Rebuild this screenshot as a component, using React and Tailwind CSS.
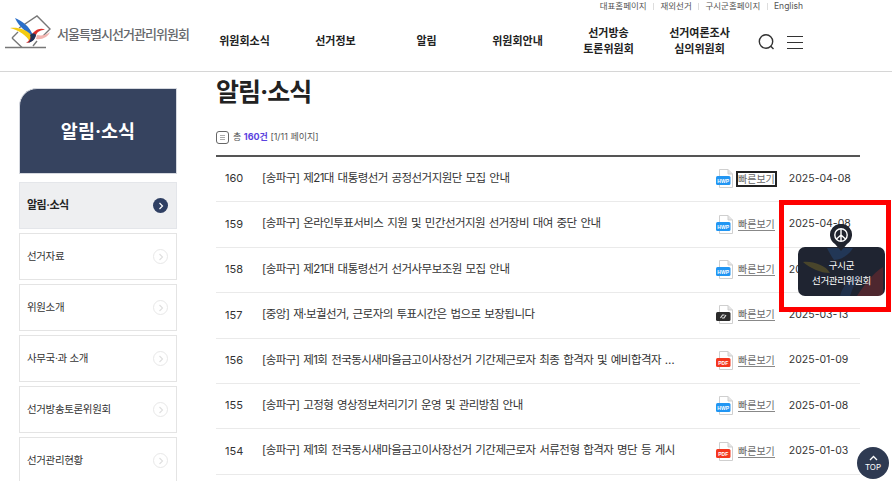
import React from 'react';

const font = { fontFamily: 'Inter, "Noto Sans CJK KR", "Noto Sans", sans-serif' };

const NAV = [
  ['위원회소식'],
  ['선거정보'],
  ['알림'],
  ['위원회안내'],
  ['선거방송', '토론위원회'],
  ['선거여론조사', '심의위원회'],
];

const SIDE = ['선거자료', '위원소개', '사무국·과 소개', '선거방송토론위원회', '선거관리현황'];

const ROWS = [
  { no: 160, title: '[송파구] 제21대 대통령선거 공정선거지원단 모집 안내', type: 'hwp', date: '2025-04-08', focus: true },
  { no: 159, title: '[송파구] 온라인투표서비스 지원 및 민간선거지원 선거장비 대여 중단 안내', type: 'hwp', date: '2025-04-08' },
  { no: 158, title: '[송파구] 제21대 대통령선거 선거사무보조원 모집 안내', type: 'hwp', date: '2025-04-08' },
  { no: 157, title: '[중앙] 재·보궐선거, 근로자의 투표시간은 법으로 보장됩니다', type: 'link', date: '2025-03-13' },
  { no: 156, title: '[송파구] 제1회 전국동시새마을금고이사장선거 기간제근로자 최종 합격자 및 예비합격자 …', type: 'pdf', date: '2025-01-09' },
  { no: 155, title: '[송파구] 고정형 영상정보처리기기 운영 및 관리방침 안내', type: 'hwp', date: '2025-01-08' },
  { no: 154, title: '[송파구] 제1회 전국동시새마을금고이사장선거 기간제근로자 서류전형 합격자 명단 등 게시', type: 'pdf', date: '2025-01-03' },
];

const Logo = () => (
  <svg width="46" height="34" viewBox="0 0 46 34" className="shrink-0">
    <path d="M14 13 L32 1 L45 14 L38 21 M7 23 L17 32.5 M7 23 L13 17 M32 26 L28 31" fill="none" stroke="#777" strokeWidth="1.4" />
    <path d="M0 32.5 H41" stroke="#777" strokeWidth="1.3" />
    <path d="M10 3 C17 6 25 11 28 21 C22 18 14 12 10 3Z" fill="#2a6fc9" />
    <path d="M5 13 C12 12 22 14 27 21 C27 24 26 26 25 27 C22 21 14 15 5 13Z" fill="#f4cb12" />
    <path d="M26 21 C29 15 36 12 40 15 C35 15 32 17 31 20 C30 24 26 28 21 28 C24 26 25 24 26 21Z" fill="#dc2f2b" />
    <path d="M25 20 C27 18 30 18 31 20 C30 25 27 27 23 28 C26 25 26 23 25 20Z" fill="#1f3257" />
    <path d="M32 20 C37 21 41 20 45 17 C43 22 37 25 31 24Z" fill="#f2b4b0" />
  </svg>
);

const FileIcon = ({ type }) => {
  const color = type === 'hwp' ? '#2196f3' : type === 'pdf' ? '#f4361e' : '#2b2b2b';
  const label = type === 'hwp' ? 'HWP' : type === 'pdf' ? 'PDF' : '';
  return (
    <svg width="17" height="19" viewBox="0 0 17 19" className="shrink-0">
      <path d="M3.5 .5 H12 L16.5 5 V18.5 H3.5Z" fill="#fff" stroke="#cfcfcf" />
      <path d="M12 .5 V5 H16.5" fill="#e4e4e4" stroke="#cfcfcf" />
      <rect x="0" y="7" width="14.5" height="9" rx="1.5" fill={color} />
      {label ? (
        <text x="7.2" y="13.5" textAnchor="middle" fontSize="5" fontWeight="700" fill="#fff" fontFamily="Liberation Sans">{label}</text>
      ) : (
        <path d="M4.5 13 L6.5 10 H8.5 M10 10 L8 13 H6" fill="none" stroke="#ddd" strokeWidth="1.2" />
      )}
    </svg>
  );
};

const Chevron = ({ active }) => (
  <span className={`flex h-[15px] w-[15px] items-center justify-center rounded-full ${active ? 'bg-[#2f3f63]' : 'border border-[#e8e8e8]'}`}>
    <svg width="6" height="8" viewBox="0 0 6 8">
      <path d="M1.5 1 L4.5 4 L1.5 7" fill="none" stroke={active ? '#fff' : '#e0e0e0'} strokeWidth="1.2" />
    </svg>
  </span>
);

const Header = () => (
  <header className="flex h-[72px] shrink-0 border-b border-[#d6d6d6] bg-white">
    <div className="flex w-[199px] shrink-0 items-start pl-[5px] pt-[15px]">
      <Logo />
      <span className="ml-[6px] mt-[9px] whitespace-nowrap text-[13px] font-medium leading-[20px] tracking-[-0.95px] text-[#66686c]">서울특별시선거관리위원회</span>
    </div>
    <div className="flex-1">
      <div className="flex h-[13px] items-center justify-end gap-[6.4px] pr-[89px] text-[8.5px] leading-[13px] text-[#555]">
        <span>대표홈페이지</span>
        <span className="h-[7px] w-px bg-[#ddd]"></span>
        <span>재외선거</span>
        <span className="h-[7px] w-px bg-[#ddd]"></span>
        <span>구시군홈페이지</span>
        <span className="h-[7px] w-px bg-[#ddd]"></span>
        <span>English</span>
      </div>
      <div className="flex items-start">
        <nav className="flex w-[546px] pt-[7px]">
          {NAV.map((lines) => (
            <div key={lines[0]} className="flex h-[42px] w-[91px] flex-col items-center justify-center text-[11px] font-bold leading-[16px] text-[#222]">
              {lines.map((t) => <span key={t} className="whitespace-nowrap">{t}</span>)}
            </div>
          ))}
        </nav>
        <div className="ml-[12px] flex items-center gap-[12px] pt-[20px]">
          <svg width="18" height="18" viewBox="0 0 18 18">
            <circle cx="9" cy="8.5" r="6.7" fill="none" stroke="#333" strokeWidth="1.4" />
            <path d="M13.5 13 L16.5 16" stroke="#333" strokeWidth="1.4" />
          </svg>
          <svg width="16" height="14" viewBox="0 0 16 14">
            <path d="M0 1.5 H16 M0 7.5 H16 M0 13.5 H16" stroke="#333" strokeWidth="1" />
          </svg>
        </div>
      </div>
    </div>
  </header>
);

const Sidebar = () => (
  <aside className="w-[158px] shrink-0 pt-[16px]">
    <div className="flex h-[86px] items-center justify-center rounded-tl-[18px] border border-[#d5d8df] bg-[#36435f] pt-[2px] text-[18.5px] font-bold text-white">알림·소식</div>
    <div className="mt-[8px] flex h-[47px] items-center justify-between border border-[#e4e6ea] bg-[#eeeff1] pl-[7px] pr-[8px] text-[11px] font-bold tracking-[-0.5px] text-[#222]">
      <span>알림·소식</span>
      <Chevron active />
    </div>
    {SIDE.map((s) => (
      <div key={s} className="mt-[4px] flex h-[47px] items-center justify-between border border-[#e4e4e4] bg-white pl-[7px] pr-[8px] text-[10.5px] tracking-[-0.35px] text-[#333]">
        <span>{s}</span>
        <Chevron />
      </div>
    ))}
  </aside>
);

const Row = ({ row }) => (
  <div className="flex h-[45.4px] items-center border-b border-[#eaeaea] pb-[1px] text-[#333]">
    <span className="w-[46px] shrink-0 pl-[9px] text-[11px]">{row.no}</span>
    <span className="w-[454px] shrink-0 truncate text-[11.5px] tracking-[-0.55px] [word-spacing:1.1px]">{row.title}</span>
    <span className="flex w-[144px] shrink-0 items-center">
      <FileIcon type={row.type} />
      <span className={`ml-[5px] text-[10px] leading-[12px] text-[#666] ${row.focus ? 'outline-2 outline-[#222]' : 'border-b border-[#888]'}`}>빠른보기</span>
      <span className="ml-[14px] whitespace-nowrap text-[10.5px]">{row.date}</span>
    </span>
  </div>
);

const Overlay = () => (
  <>
    <div className="absolute left-[779px] top-[200px] h-[112px] w-[112px] border-[5px] border-[#fe0000]"></div>
    <div className="absolute left-[798px] top-[247px] flex h-[49px] w-[87px] flex-col items-center justify-center overflow-hidden rounded-[7px] bg-[#1f2431] pt-[4px] text-[9.5px] leading-[14.5px] tracking-[-0.3px] text-white">
      <svg className="absolute left-0 top-0" width="87" height="49" viewBox="0 0 87 49">
        <path d="M5 15 C15 14 27 18 32 26 C22 26 12 21 5 15Z" fill="#f4cb12" opacity=".2" />
        <path d="M29 1 H55 C51 8 43 13 36 13 C33 9 31 5 29 1Z" fill="#2a6fc9" opacity=".25" />
        <path d="M59 49 C66 38 75 26 85 20 V49Z" fill="#dc2f2b" opacity=".25" />
        <path d="M42 49 C44 40 50 33 60 28 C57 36 54 43 52 49Z" fill="#2a6fc9" opacity=".18" />
      </svg>
      <span className="relative">구시군</span>
      <span className="relative whitespace-nowrap">선거관리위원회</span>
    </div>
    <svg className="absolute left-[830px] top-[224px]" width="22" height="27" viewBox="0 0 22 27">
      <path d="M11 27 L5 20 A11 11 0 1 1 17 20Z" fill="#20242e" />
      <circle cx="11" cy="11" r="6.2" fill="none" stroke="#fff" strokeWidth="1.4" />
      <path d="M11 5 V17 M11 11 L6.5 15 M11 11 L15.5 15" stroke="#fff" strokeWidth="1.4" fill="none" />
    </svg>
    <div className="absolute left-[857px] top-[447px] flex h-[32px] w-[32px] flex-col items-center justify-center rounded-full bg-[#2e3a52] text-[8px] leading-[9px] text-white">
      <svg width="9" height="6" viewBox="0 0 9 6" className="mb-[2px]">
        <path d="M1 5 L4.5 1.5 L8 5" fill="none" stroke="#fff" strokeWidth="1.3" />
      </svg>
      <span>TOP</span>
    </div>
  </>
);

export default function App() {
  return (
    <div className="relative flex h-[481px] w-[892px] flex-col overflow-hidden bg-white" style={font}>
      <Header />
      <div className="flex pl-[19px]">
        <Sidebar />
        <main className="ml-[39px] w-[644px]">
          <h1 className="mt-[1px] h-[38px] text-[25px] font-bold leading-[38px] tracking-[-1px] text-[#222]">알림·소식</h1>
          <div className="mt-[19px] flex h-[14px] items-center text-[9px] text-[#555]">
            <svg width="13" height="13" viewBox="0 0 13 13" className="mr-[4px]">
              <rect x=".5" y=".5" width="12" height="12" rx="2.5" fill="none" stroke="#666" />
              <path d="M4 4.5 H9 M4 6.5 H9 M4 8.5 H9" stroke="#888" strokeWidth=".7" />
            </svg>
            <span>총 <b className="text-[#5b43e0]">160건</b> [1/11 페이지]</span>
          </div>
          <div className="mt-[11px] border-t-2 border-[#555]">
            {ROWS.map((r) => <Row key={r.no} row={r} />)}
          </div>
        </main>
      </div>
      <Overlay />
    </div>
  );
}
